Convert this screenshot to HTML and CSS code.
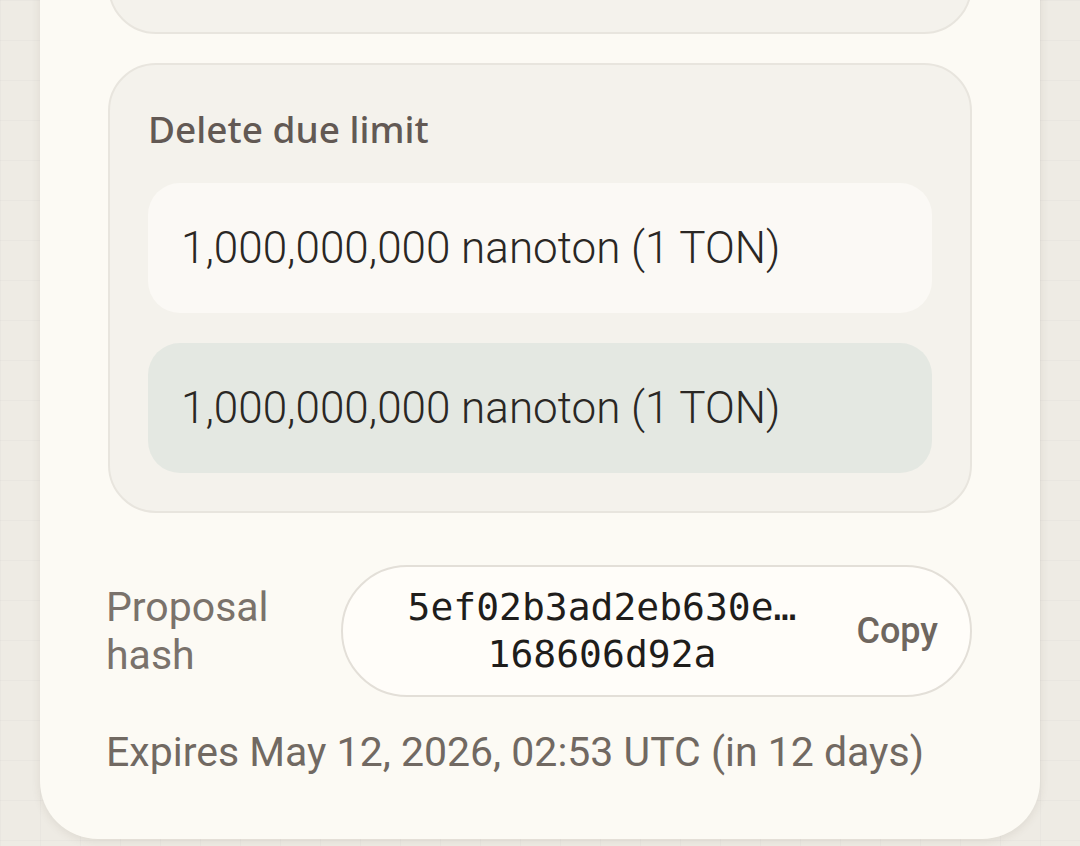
FILE: index.html
```html
<!DOCTYPE html>
<html lang="en">
<head>
    <meta charset="UTF-8">
    <title>Proposal</title>
    <link rel="stylesheet" href="styles.css">
</head>
<body>
    <div class="card">
        <div class="section section-prev"></div>

        <div class="section">
            <div class="section-title">Delete due limit</div>
            <div class="value-row">1,000,000,000 nanoton (1 TON)</div>
            <div class="value-row value-new">1,000,000,000 nanoton (1 TON)</div>
        </div>

        <div class="hash-row">
            <div class="hash-label">Proposal hash</div>
            <div class="hash-pill">
                <div class="hash-text">5ef02b3ad2eb630e…<br>168606d92a</div>
                <button class="copy-btn">Copy</button>
            </div>
        </div>

        <div class="expires">Expires May 12, 2026, 02:53 UTC (in 12 days)</div>
    </div>
</body>
</html>
```

FILE: styles.css
```css
html, body {
    height: 100%;
}
body {
    margin: 0;
    overflow: hidden;
    font-family: Roboto, "Noto Sans", sans-serif;
    background-color: #eeebe4;
    background-image:
        linear-gradient(rgba(0, 0, 0, 0.018) 1px, transparent 1px),
        linear-gradient(90deg, rgba(0, 0, 0, 0.018) 1px, transparent 1px);
    background-size: 40px 40px;
}
.card {
    margin: -160px 40px 0;
    padding: 30px 68px 58px;
    background: #fcfaf4;
    border-radius: 0 0 58px 58px;
    box-shadow: 0 2px 10px rgba(80, 60, 40, 0.10);
}
.section {
    background: #f4f2ec;
    border: 2px solid #e8e5de;
    border-radius: 48px;
    padding: 38px 38px 38px;
}
.section-prev {
    height: 84px;
    margin-bottom: 29px;
}
.section-title {
    font-family: "Noto Sans", sans-serif;
    font-size: 37px;
    font-weight: 500;
    line-height: 52px;
    color: #625954;
    margin-bottom: 28px;
}
.value-row {
    height: 130px;
    display: flex;
    align-items: center;
    padding-left: 33px;
    border-radius: 32px;
    background: #fbf9f5;
    font-size: 44px;
    font-weight: 300;
    color: #2a2724;
}
.value-row + .value-row {
    margin-top: 30px;
}
.value-new {
    background: #e4e8e2;
}
.hash-row {
    display: grid;
    grid-template-columns: 203px 1fr;
    gap: 30px;
    align-items: center;
    margin-top: 52px;
}
.hash-label {
    margin-left: -2px;
    font-size: 41px;
    line-height: 48px;
    color: #7a726b;
}
.hash-pill {
    height: 128px;
    display: flex;
    align-items: center;
    padding: 0 34px 0 62px;
    background: #fffdf9;
    border: 2px solid #e3dfd8;
    border-radius: 66px;
}
.hash-text {
    width: 394px;
    text-align: center;
    font-family: "DejaVu Sans Mono", monospace;
    font-size: 38px;
    line-height: 47px;
    color: #1f1d1b;
}
.copy-btn {
    margin-left: auto;
    margin-right: -2px;
    padding: 0;
    border: none;
    background: none;
    font-family: Roboto, sans-serif;
    font-size: 36px;
    font-weight: 500;
    color: #6e665f;
    cursor: pointer;
}
.expires {
    margin-top: 26px;
    margin-left: -2px;
    font-size: 41px;
    line-height: 58px;
    color: #716962;
}
```
